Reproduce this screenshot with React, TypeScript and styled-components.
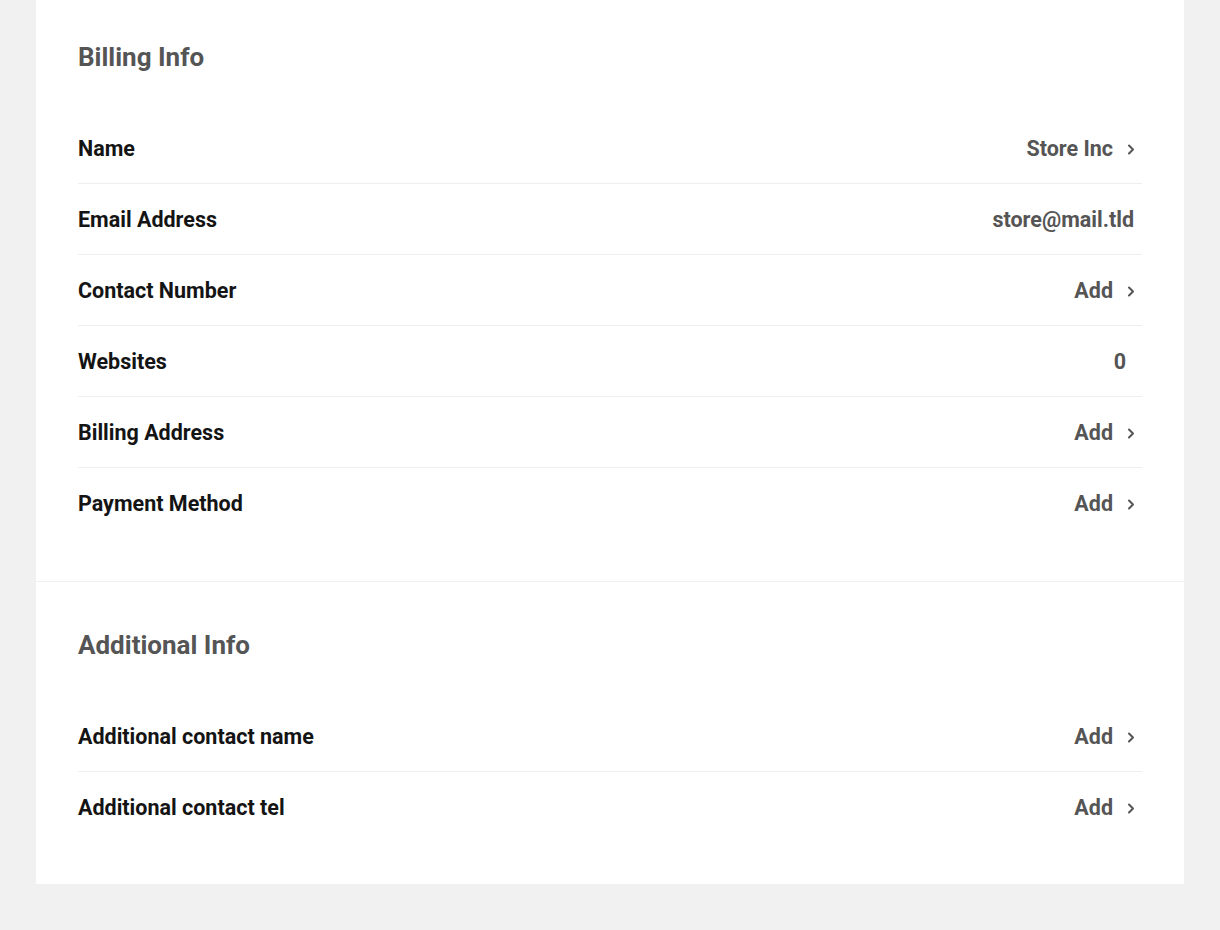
import styled, { createGlobalStyle } from 'styled-components';

const GlobalStyle = createGlobalStyle`
	html, body {
		margin: 0;
		padding: 0;
		background: #f1f1f1;
		font-family: Roboto, 'Noto Sans', Arial, sans-serif;
	}
`;

const Page = styled.div`
	padding: 0 36px 46px;
`;

const Card = styled.div`
	background: #ffffff;
`;

const Section = styled.section<{ $top: number; $bottom: number }>`
	padding: ${(p) => p.$top}px 42px ${(p) => p.$bottom}px;

	& + & {
		border-top: 1px solid #efefef;
	}
`;

const Title = styled.h2`
	margin: 0 0 41px;
	height: 30px;
	line-height: 30px;
	font-size: 26px;
	font-weight: 700;
	color: #555555;
`;

const Row = styled.div`
	display: flex;
	align-items: center;
	justify-content: space-between;
	height: 70px;

	& + & {
		border-top: 1px solid #eeeeee;
	}
`;

const Label = styled.span`
	font-size: 21.5px;
	font-weight: 700;
	color: #141414;
`;

const Value = styled.div<{ $pad: number }>`
	display: flex;
	align-items: center;
	padding-right: ${(p) => p.$pad}px;
	font-size: 21.5px;
	font-weight: 700;
	color: #555555;
`;

const Chevron = styled.span`
	display: flex;
	justify-content: center;
	width: 10px;
	margin-left: 13px;
	padding-top: 2px;
`;

type Item = {
	label: string;
	value: string;
	link?: boolean;
	pad?: number;
};

const billing: Item[] = [
	{ label: 'Name', value: 'Store Inc', link: true, pad: 6 },
	{ label: 'Email Address', value: 'store@mail.tld', pad: 8 },
	{ label: 'Contact Number', value: 'Add', link: true, pad: 6 },
	{ label: 'Websites', value: '0', pad: 16 },
	{ label: 'Billing Address', value: 'Add', link: true, pad: 6 },
	{ label: 'Payment Method', value: 'Add', link: true, pad: 6 },
];

const additional: Item[] = [
	{ label: 'Additional contact name', value: 'Add', link: true, pad: 6 },
	{ label: 'Additional contact tel', value: 'Add', link: true, pad: 6 },
];

const ChevronIcon = () => (
	<svg width="8" height="11" viewBox="0 0 8 11" fill="none">
		<path d="M2 1.5 L6 5.5 L2 9.5" stroke="#555555" strokeWidth="2" strokeLinecap="round" strokeLinejoin="round" />
	</svg>
);

const InfoRow = ({ label, value, link, pad = 0 }: Item) => (
	<Row>
		<Label>{label}</Label>
		<Value $pad={pad}>
			{value}
			{link && (
				<Chevron>
					<ChevronIcon />
				</Chevron>
			)}
		</Value>
	</Row>
);

export default function App() {
	return (
		<Page>
			<GlobalStyle />
			<Card>
				<Section $top={42} $bottom={43}>
					<Title>Billing Info</Title>
					{billing.map((item) => (
						<InfoRow key={item.label} {...item} />
					))}
				</Section>
				<Section $top={48} $bottom={42}>
					<Title>Additional Info</Title>
					{additional.map((item) => (
						<InfoRow key={item.label} {...item} />
					))}
				</Section>
			</Card>
		</Page>
	);
}
